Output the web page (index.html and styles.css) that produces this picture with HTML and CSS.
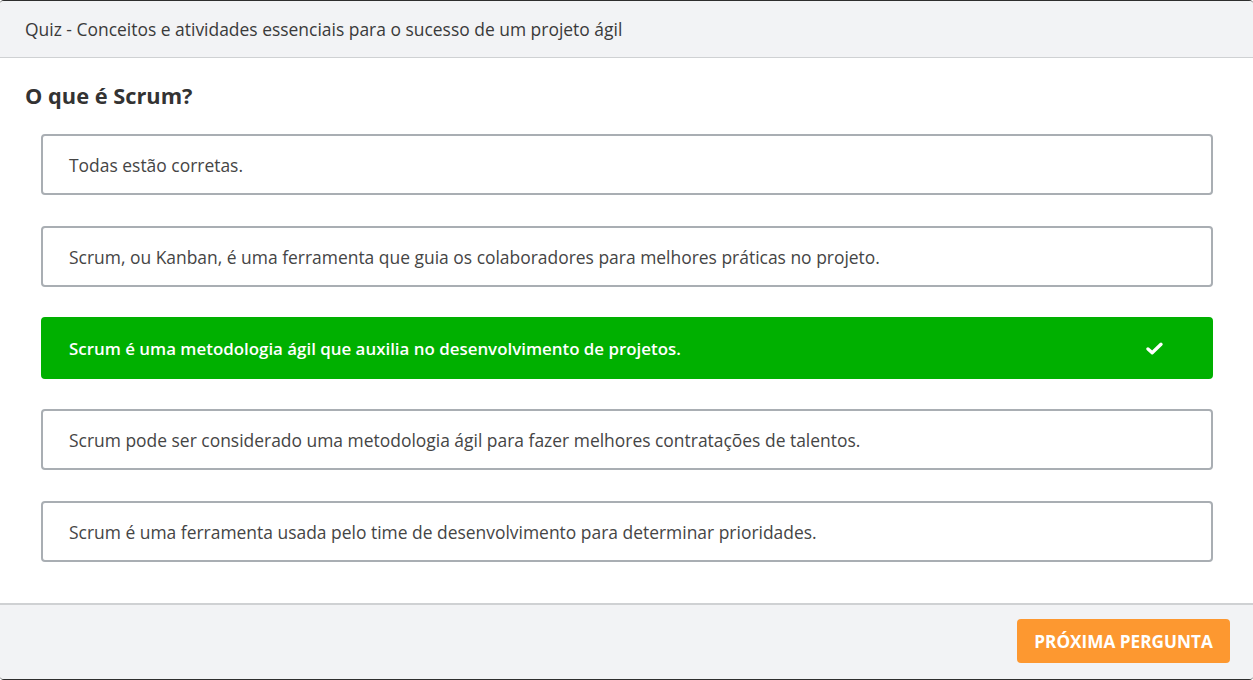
FILE: index.html
```html
<!DOCTYPE html>
<html lang="pt">
<head>
<meta charset="utf-8">
<link rel="stylesheet" href="styles.css">
</head>
<body>
<div class="modal">
  <header class="head">Quiz - Conceitos e atividades essenciais para o sucesso de um projeto ágil</header>
  <main class="content">
    <h1 class="question">O que é Scrum?</h1>
    <ul class="options">
      <li class="option">Todas estão corretas.</li>
      <li class="option">Scrum, ou Kanban, é uma ferramenta que guia os colaboradores para melhores práticas no projeto.</li>
      <li class="option correct">Scrum é uma metodologia ágil que auxilia no desenvolvimento de projetos.
        <svg class="check" viewBox="0 0 18 14" width="17" height="13"><path d="M2 7.5 L6.5 11.5 L16 2.5" fill="none" stroke="#fff" stroke-width="3.6" stroke-linecap="round" stroke-linejoin="round"/></svg>
      </li>
      <li class="option">Scrum pode ser considerado uma metodologia ágil para fazer melhores contratações de talentos.</li>
      <li class="option">Scrum é uma ferramenta usada pelo time de desenvolvimento para determinar prioridades.</li>
    </ul>
  </main>
  <footer class="foot">
    <button class="next">PRÓXIMA PERGUNTA</button>
  </footer>
</div>
</body>
</html>
```
FILE: styles.css
```css
* { box-sizing: border-box; }
html, body { margin: 0; padding: 0; }
body {
  font-family: "Open Sans", "Liberation Sans", sans-serif;
  background: #fff;
  color: #3c3c3c;
}
.modal {
  height: 680px;
  display: flex;
  flex-direction: column;
  border-top: 1px solid #2e2e2e;
  border-bottom: 1px solid #2e2e2e;
  border-radius: 4px;
  overflow: hidden;
}
.head {
  height: 57px;
  background: #f2f3f5;
  border-bottom: 1px solid #cfd1d3;
  padding: 0 25px;
  display: flex;
  align-items: center;
  font-size: 17.45px;
  color: #3a3a3a;
  flex: none;
}
.content {
  flex: 1;
  padding: 24px 40px 0 0;
}
.question {
  margin: 0 0 24px 25px;
  font-size: 21.8px;
  font-weight: 700;
  color: #333;
  line-height: 28px;
}
.options {
  list-style: none;
  margin: 0;
  padding: 0 0 0 41px;
  display: flex;
  flex-direction: column;
  gap: 31px;
}
.option {
  height: 61px;
  border: 2px solid #a9aeb3;
  border-radius: 4px;
  padding: 0 48px 0 26px;
  display: flex;
  align-items: center;
  justify-content: space-between;
  font-size: 17.45px;
  color: #454545;
}
.option.correct {
  background: #00b000;
  border-color: #00b000;
  color: #fff;
  font-weight: 600;
  font-size: 16.9px;
  height: 62px;
  margin-top: -1px;
  margin-bottom: -1px;
}
.check { flex: none; }
.foot {
  height: 76px;
  flex: none;
  background: #f2f3f5;
  border-top: 2px solid #cfd1d3;
  display: flex;
  justify-content: flex-end;
  align-items: flex-start;
  padding: 14px 23px 0 0;
}
.next {
  width: 213px;
  height: 44px;
  border: none;
  border-radius: 4px;
  background: #fd9830;
  color: #fff;
  font-family: "Open Sans", "Liberation Sans", sans-serif;
  font-weight: 700;
  font-size: 17.2px;
  cursor: pointer;
}
```
